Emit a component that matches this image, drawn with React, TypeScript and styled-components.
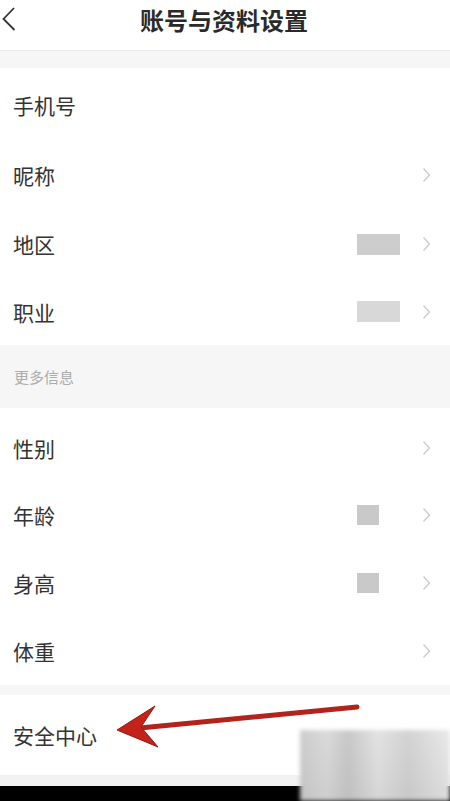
import React from "react";
import styled, { createGlobalStyle } from "styled-components";

const Global = createGlobalStyle`
  html, body { margin: 0; padding: 0; background: #ffffff; }
  body { font-family: "Noto Sans CJK SC", "Noto Sans", sans-serif; }
`;

const Page = styled.div`
  position: relative;
  width: 450px;
  height: 801px;
  overflow: hidden;
  background: #ffffff;
  display: flex;
  flex-direction: column;
`;

const Header = styled.header`
  height: 50px;
  flex: none;
  display: grid;
  grid-template-columns: 40px 1fr 40px;
  align-items: center;
  border-bottom: 1px solid #ececec;
`;

const BackButton = styled.div`
  display: flex;
  align-items: center;
  justify-content: flex-start;
  height: 100%;
  padding-left: 1px;
  padding-bottom: 12px;
  box-sizing: border-box;
`;

const Title = styled.h1`
  margin: 0;
  text-align: center;
  font-size: 24px;
  font-weight: 700;
  color: #2a2a2a;
  line-height: 1;
  padding-bottom: 10px;
  padding-right: 2px;
`;

const Band = styled.div<{ $h: number }>`
  height: ${(p) => p.$h}px;
  flex: none;
  background: #f6f6f6;
`;

const SectionHeader = styled.div`
  height: 63px;
  flex: none;
  background: #f6f6f6;
  display: flex;
  align-items: center;
  padding-left: 14px;
  font-size: 15px;
  color: #acacac;
`;

const Row = styled.div<{ $h: number; $shift?: number }>`
  height: ${(p) => p.$h}px;
  flex: none;
  display: flex;
  align-items: center;
  padding: 0 19px 0 13px;
  padding-top: ${(p) => p.$shift ?? 0}px;
  box-sizing: border-box;
  background: #fff;
`;

const Label = styled.span`
  flex: 1;
  font-size: 21px;
  color: #333333;
`;

const Value = styled.div<{ $w: number; $h: number; $tone: string; $gap: number }>`
  width: ${(p) => p.$w}px;
  height: ${(p) => p.$h}px;
  background: ${(p) => p.$tone};
  margin-right: ${(p) => p.$gap}px;
  filter: blur(0.6px);
`;

const Chevron = styled.svg`
  width: 9px;
  height: 16px;
  flex: none;
`;

const BottomBar = styled.div`
  flex: 1;
  display: flex;
  flex-direction: column;
`;

const BottomGray = styled.div`
  height: 11px;
  background: #f2f2f2;
`;

const BottomBlack = styled.div`
  flex: 1;
  background: #000;
`;

const Watermark = styled.div`
  position: absolute;
  left: 300px;
  top: 730px;
  width: 150px;
  height: 71px;
  background:
    linear-gradient(180deg, rgba(255,255,255,0.15), rgba(190,190,190,0.25)),
    linear-gradient(90deg, #c4c4c4 0%, #d4d4d4 18%, #bfbfbf 32%, #dedede 52%, #cbcbcb 72%, #e6e6e6 100%);
  filter: blur(2px);
`;

const ArrowSvg = styled.svg`
  position: absolute;
  left: 110px;
  top: 700px;
  width: 255px;
  height: 52px;
  pointer-events: none;
`;

const ChevronIcon = () => (
  <Chevron viewBox="0 0 9 16">
    <path d="M1.5 1.5 L7.5 8 L1.5 14.5" fill="none" stroke="#cccccc" strokeWidth="1.4" />
  </Chevron>
);

type Item = {
  label: string;
  h: number;
  shift?: number;
  chevron?: boolean;
  value?: { w: number; h: number; tone: string; gap: number };
};

const top: Item[] = [
  { label: "手机号", h: 72, shift: 2 },
  { label: "昵称", h: 70, chevron: true },
  { label: "地区", h: 68, chevron: true, value: { w: 43, h: 21, tone: "#cdcdcd", gap: 22 } },
  { label: "职业", h: 67, chevron: true, value: { w: 43, h: 21, tone: "#d8d8d8", gap: 22 } },
];

const more: Item[] = [
  { label: "性别", h: 73, shift: 6, chevron: true },
  { label: "年龄", h: 68, chevron: true, value: { w: 22, h: 20, tone: "#c9c9c9", gap: 43 } },
  { label: "身高", h: 68, chevron: true, value: { w: 22, h: 20, tone: "#c9c9c9", gap: 43 } },
  { label: "体重", h: 68, chevron: true },
];

const renderRow = (it: Item) => (
  <Row key={it.label} $h={it.h} $shift={it.shift}>
    <Label>{it.label}</Label>
    {it.value && (
      <Value $w={it.value.w} $h={it.value.h} $tone={it.value.tone} $gap={it.value.gap} />
    )}
    {it.chevron && <ChevronIcon />}
  </Row>
);

export default function App() {
  return (
    <>
      <Global />
      <Page>
        <Header>
          <BackButton>
            <svg width="16" height="26" viewBox="0 0 16 26">
              <path d="M13 2 L2.5 13 L13.5 24" fill="none" stroke="#333" strokeWidth="1.8" />
            </svg>
          </BackButton>
          <Title>账号与资料设置</Title>
          <div />
        </Header>
        <Band $h={17} />
        {top.map(renderRow)}
        <SectionHeader>更多信息</SectionHeader>
        {more.map(renderRow)}
        <Band $h={10} />
        <Row $h={80}>
          <Label>安全中心</Label>
        </Row>
        <BottomBar>
          <BottomGray />
          <BottomBlack />
        </BottomBar>
        <Watermark />
        <ArrowSvg viewBox="0 0 255 52">
          <line x1="247" y1="7" x2="30" y2="28" stroke="#b3231a" strokeWidth="5" strokeLinecap="round" />
          <path d="M7 30 L45 6 L31 27 L48 47 Z" fill="#c4221a" stroke="#8e1a12" strokeWidth="1" strokeLinejoin="round" />
        </ArrowSvg>
      </Page>
    </>
  );
}
